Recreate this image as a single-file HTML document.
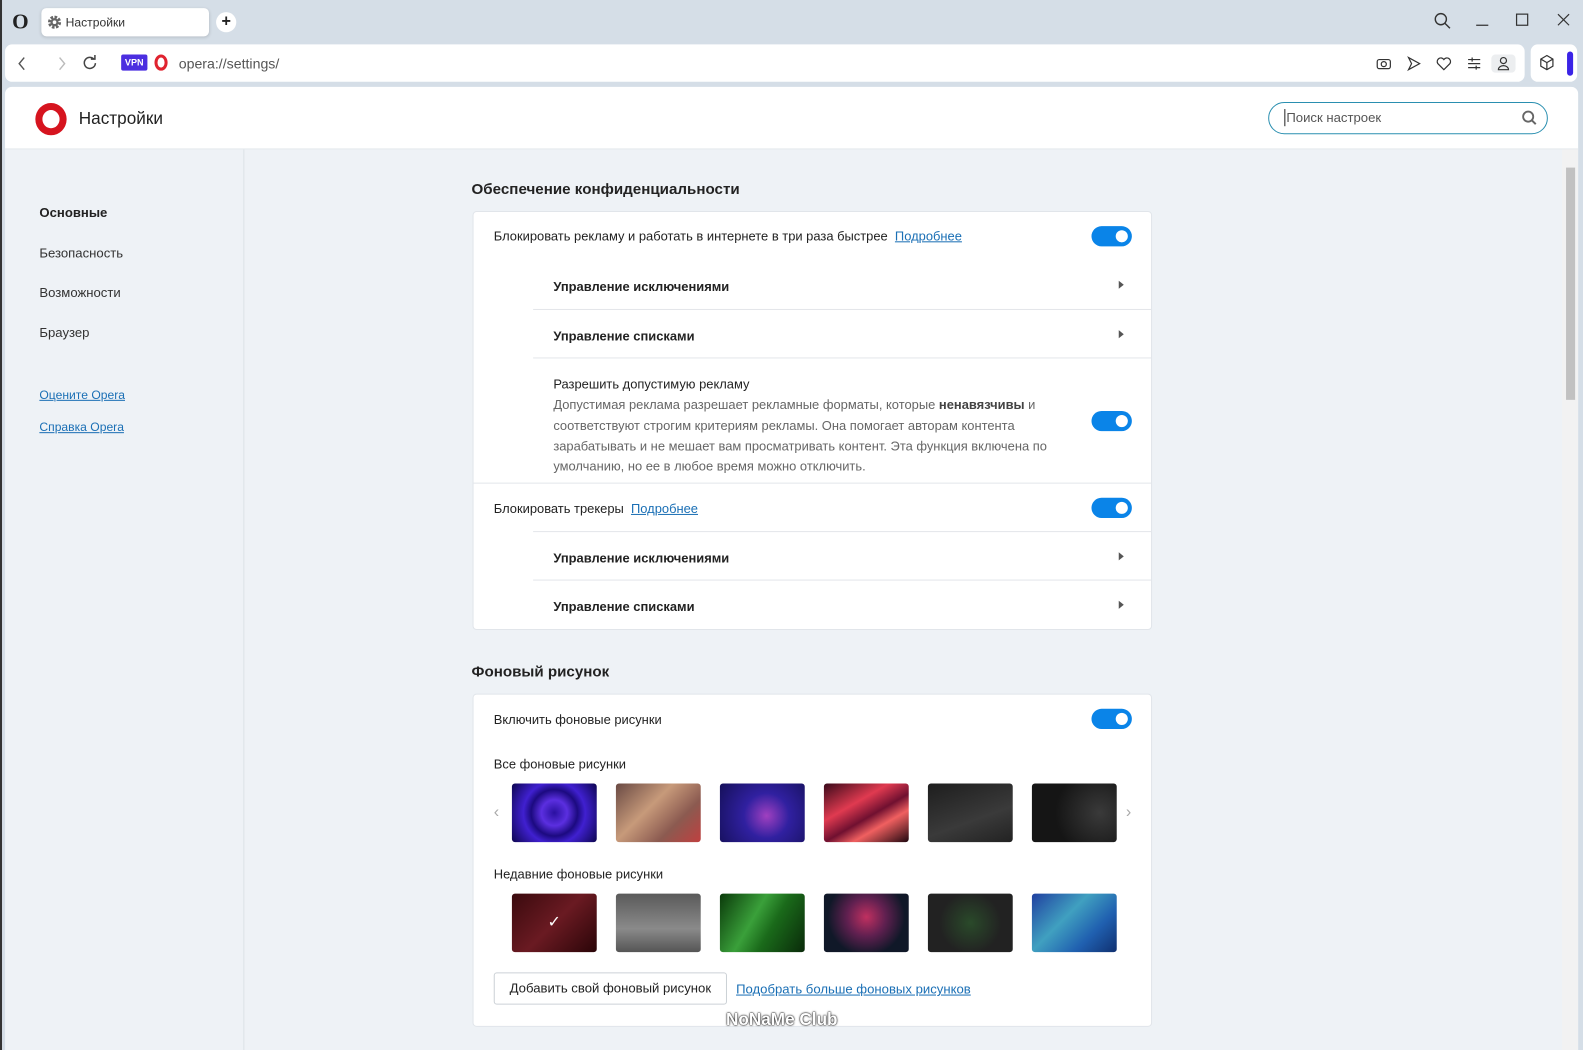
<!DOCTYPE html><html><head><meta charset="utf-8"><style>
*{box-sizing:border-box;margin:0;padding:0}
body{width:1583px;height:1040px;overflow:hidden;background:#d5dee7;font-family:"Liberation Sans",sans-serif;font-size:13px;color:#222;position:relative}
#w{position:absolute;left:0;top:0;width:1568px;height:1030px;transform:scale(1.0097);transform-origin:0 0}
.abs{position:absolute}
.tab{left:41px;top:8px;width:166px;height:28px;background:#fff;border-radius:5px;box-shadow:0 1px 3px rgba(0,0,0,.15)}
.addr{left:5px;top:44px;width:1505px;height:37px;background:#fff;border-radius:7px}
.ext{left:1516px;top:44px;width:46px;height:37px;background:#fff;border-radius:7px}
.page{left:5px;top:86px;width:1558px;height:954px;background:#eef2f6;border-radius:7px 7px 0 0;overflow:hidden}
.hdr{left:0;top:0;width:1558px;height:62px;background:#fff;border-bottom:1px solid #e3e7eb}
.side{left:0;top:62px;width:237px;height:900px;border-right:1px solid #dde2e7}
.card{left:463px;width:673px;background:#fff;border:1px solid #e1e5ea;border-radius:4px}
.row{position:absolute;left:0;right:0;font-size:12.8px}
.sub{position:absolute;left:59px;right:0;border-top:1px solid #e3e6ea;font-weight:bold;font-size:12.8px}
.tg{position:absolute;right:19px;width:40px;height:20px;border-radius:10px;background:#0a84e8}
.tg:after{content:"";position:absolute;right:4px;top:4px;width:12px;height:12px;border-radius:50%;background:#fff}
.arr{position:absolute;right:27px;width:0;height:0;border-left:5px solid #555;border-top:4px solid transparent;border-bottom:4px solid transparent}
a{color:#1a6fb5;text-decoration:underline}
.h2{position:absolute;left:462px;font-size:15px;font-weight:bold;color:#222}
.wp{position:absolute;width:84px;height:58px;border-radius:3px}
</style></head><body><div id="w">
<div class="abs" style="left:0;top:0;width:2px;height:1040px;background:#333"></div>
<div class="abs" style="left:12px;top:9px;font-family:'Liberation Serif';font-weight:bold;font-size:21px">O</div>
<div class="abs tab"><svg class="abs" style="left:5px;top:6px" width="16" height="16" viewBox="0 0 16 16"><circle cx="8" cy="8" r="5" fill="none" stroke="#666" stroke-width="3" stroke-dasharray="2.5 1.4"/><circle cx="8" cy="8" r="4" fill="#666"/><circle cx="8" cy="8" r="1.8" fill="#fff"/></svg><span class="abs" style="left:24px;top:7px;font-size:12px;color:#333">Настройки</span></div>
<div class="abs" style="left:214px;top:12px;width:20px;height:20px;border-radius:50%;background:#fff;text-align:center;font-weight:bold;font-size:16px;line-height:20px">+</div>
<svg class="abs" style="left:1420px;top:12px" width="160" height="18" viewBox="0 0 160 18"><circle cx="7" cy="7" r="5.5" fill="none" stroke="#333" stroke-width="1.4"/><path d="M11 11l5 5" stroke="#333" stroke-width="1.4"/><path d="M42 13h12" stroke="#333" stroke-width="1.2"/><rect x="82" y="2" width="11" height="11" fill="none" stroke="#333" stroke-width="1.2"/><path d="M123 2l11 11M134 2l-11 11" stroke="#333" stroke-width="1.2"/></svg>
<div class="abs addr">
<svg class="abs" style="left:12px;top:11px" width="60" height="16"><path d="M7 2l-5 6 5 6" fill="none" stroke="#555" stroke-width="1.4"/><path d="M42 2l5 6-5 6" fill="none" stroke="#bbb" stroke-width="1.4"/></svg>
<svg class="abs" style="left:76px;top:10px" width="16" height="16"><path d="M12 4.5a5.5 5.5 0 1 0 1.5 4" fill="none" stroke="#444" stroke-width="1.5"/><path d="M9 4.5h4v-4" fill="none" stroke="#444" stroke-width="1.5"/></svg>
<div class="abs" style="left:115px;top:10px;width:26px;height:16px;background:#4b2ee0;border-radius:2px;color:#fff;font-size:9px;font-weight:bold;text-align:center;line-height:16px">VPN</div>
<div class="abs" style="left:148px;top:10px;width:13px;height:16px;border:3px solid #e0232f;border-radius:50%"></div>
<div class="abs" style="left:172px;top:11px;font-size:14px;color:#555">opera://settings/</div>
<svg class="abs" style="left:1357px;top:10px" width="140" height="18" viewBox="0 0 140 18"><rect x="2" y="5" width="13" height="9" rx="2" fill="none" stroke="#333" stroke-width="1.2"/><circle cx="8.5" cy="9.5" r="2.5" fill="none" stroke="#333" stroke-width="1.2"/><path d="M33 3l11 6-11 6 3-6z" fill="none" stroke="#333" stroke-width="1.2"/><path d="M68 15l-6-6a3.3 3.3 0 0 1 6-4a3.3 3.3 0 0 1 6 4z" fill="none" stroke="#333" stroke-width="1.2"/><path d="M92 5h12M92 9h12M92 13h12M96 3v4M100 11v4" stroke="#333" stroke-width="1.2"/><rect x="115" y="0" width="24" height="18" rx="4" fill="#eceef0"/><circle cx="127" cy="6" r="3" fill="none" stroke="#333" stroke-width="1.2"/><path d="M122 15a5 4 0 0 1 10 0z" fill="none" stroke="#333" stroke-width="1.2"/></svg>
</div>
<div class="abs ext"><svg class="abs" style="left:8px;top:10px" width="16" height="16"><path d="M8 1l6 3.5v7L8 15l-6-3.5v-7zM2 4.5L8 8l6-3.5M8 8v7" fill="none" stroke="#333" stroke-width="1.2"/></svg><div class="abs" style="left:36px;top:7px;width:6px;height:24px;border-radius:3px;background:#3a23e6"></div></div>
<div class="abs page">
<div class="abs hdr">
<div class="abs" style="left:30px;top:16px;width:31px;height:32px;border:7px solid #d6141f;border-radius:50%"></div>
<div class="abs" style="left:73px;top:22px;font-size:17px;color:#222">Настройки</div>
<div class="abs" style="left:1251px;top:15px;width:277px;height:32px;border:1.5px solid #2a8fb0;border-radius:16px"><span class="abs" style="left:17px;top:7px;font-size:13px;color:#555">Поиск настроек</span><div class="abs" style="left:15px;top:6px;width:1px;height:17px;background:#222"></div><svg class="abs" style="left:250px;top:7px" width="16" height="16"><circle cx="6.5" cy="6.5" r="5" fill="none" stroke="#666" stroke-width="1.8"/><path d="M10 10l4 4" stroke="#666" stroke-width="2"/></svg></div>
</div>
<div class="abs side">
<div class="abs" style="left:34px;top:55px;font-weight:bold;font-size:13px">Основные</div>
<div class="abs" style="left:34px;top:95px;color:#333">Безопасность</div>
<div class="abs" style="left:34px;top:134px;color:#333">Возможности</div>
<div class="abs" style="left:34px;top:174px;color:#333">Браузер</div>
<a class="abs" style="left:34px;top:236px;font-size:12px">Оцените Opera</a>
<a class="abs" style="left:34px;top:268px;font-size:12px">Справка Opera</a>
</div>
<div class="abs" style="left:1542px;top:62px;width:16px;height:900px;background:#f2f2f2"><div class="abs" style="left:4px;top:18px;width:9px;height:230px;background:#c1c1c1"></div></div>
<div class="h2" style="top:93px">Обеспечение конфиденциальности</div>
<div class="abs card" style="top:123px;height:415px">
<div class="row" style="top:16px;left:20px">Блокировать рекламу и работать в интернете в три раза быстрее &nbsp;<a>Подробнее</a></div><div class="tg" style="top:14px"></div>
<div class="sub" style="top:48px;height:48px;border-top:none"><span class="abs" style="left:20px;top:18px">Управление исключениями</span><div class="arr" style="top:20px"></div></div>
<div class="sub" style="top:96px;height:48px"><span class="abs" style="left:20px;top:18px">Управление списками</span><div class="arr" style="top:20px"></div></div>
<div class="sub" style="top:144px;height:124px;font-weight:normal"><div class="abs" style="left:20px;top:16px;width:500px;line-height:20.3px;color:#666;font-size:12.8px"><span style="color:#222">Разрешить допустимую рекламу</span><br>Допустимая реклама разрешает рекламные форматы, которые <b style="color:#444">ненавязчивы</b> и соответствуют строгим критериям рекламы. Она помогает авторам контента зарабатывать и не мешает вам просматривать контент. Эта функция включена по умолчанию, но ее в любое время можно отключить.</div><div class="tg" style="top:52px"></div></div>
<div class="row" style="top:268px;height:48px;border-top:1px solid #e3e6ea"><span class="abs" style="left:20px;top:17px">Блокировать трекеры &nbsp;<a>Подробнее</a></span><div class="tg" style="top:14px"></div></div>
<div class="sub" style="top:316px;height:48px"><span class="abs" style="left:20px;top:18px">Управление исключениями</span><div class="arr" style="top:20px"></div></div>
<div class="sub" style="top:364px;height:48px"><span class="abs" style="left:20px;top:18px">Управление списками</span><div class="arr" style="top:20px"></div></div>
</div>
<div class="h2" style="top:571px">Фоновый рисунок</div>
<div class="abs card" style="top:601px;height:330px">
<div class="row" style="top:17px;left:20px">Включить фоновые рисунки</div><div class="tg" style="top:14px"></div>
<div class="row" style="top:61px;left:20px">Все фоновые рисунки</div>
<div class="abs" style="left:20px;top:108px;color:#aaa;font-size:16px">‹</div><div class="abs" style="left:646px;top:108px;color:#aaa;font-size:16px">›</div>
<div class="wp" style="left:38px;top:88px;background:radial-gradient(circle,#2a10a0 0,#5b2fe0 25%,#1c0a80 45%,#4020d0 60%,#0d0650 100%)"></div>
<div class="wp" style="left:141px;top:88px;background:linear-gradient(135deg,#6a4a44,#c79a7a 40%,#8b5a50 70%,#c04040)"></div>
<div class="wp" style="left:244px;top:88px;background:radial-gradient(circle at 55% 55%,#a040c0,#3020a0 40%,#15105a)"></div>
<div class="wp" style="left:347px;top:88px;background:linear-gradient(150deg,#3a0a1a,#e03a50 35%,#701030 55%,#f06060 70%,#200810)"></div>
<div class="wp" style="left:450px;top:88px;background:linear-gradient(160deg,#1e1e1e,#3a3a3a 60%,#222)"></div>
<div class="wp" style="left:553px;top:88px;background:radial-gradient(circle at 80% 50%,#3a3a3a,#151515 60%)"></div>
<div class="row" style="top:170px;left:20px">Недавние фоновые рисунки</div>
<div class="wp" style="left:38px;top:197px;background:linear-gradient(135deg,#3a0a0e,#6a1a22 50%,#2a0508);color:#fff;text-align:center;line-height:58px;font-size:16px">✓</div>
<div class="wp" style="left:141px;top:197px;background:linear-gradient(180deg,#5a5a5a,#8a8a8a 60%,#555)"></div>
<div class="wp" style="left:244px;top:197px;background:linear-gradient(120deg,#0a3a0a,#3aa03a 40%,#1a6a1a 60%,#0a2a0a)"></div>
<div class="wp" style="left:347px;top:197px;background:radial-gradient(circle at 50% 40%,#c03060,#602050 35%,#101828 70%)"></div>
<div class="wp" style="left:450px;top:197px;background:radial-gradient(circle,#2a4a2a,#222 60%)"></div>
<div class="wp" style="left:553px;top:197px;background:linear-gradient(135deg,#2040a0,#40a0c0 40%,#2060b0 70%,#103070)"></div>
<div class="abs" style="left:20px;top:275px;width:231px;height:32px;border:1px solid #ccd1d6;border-radius:3px;text-align:center;line-height:30px">Добавить свой фоновый рисунок</div>
<a class="abs" style="left:260px;top:284px">Подобрать больше фоновых рисунков</a>
</div>
<div class="abs" style="left:714px;top:914px;font-size:17px;color:#fff;text-shadow:0 0 2px #000,0 0 1px #000;font-weight:bold">NoNaMe Club</div>
</div>
</div></body></html>
